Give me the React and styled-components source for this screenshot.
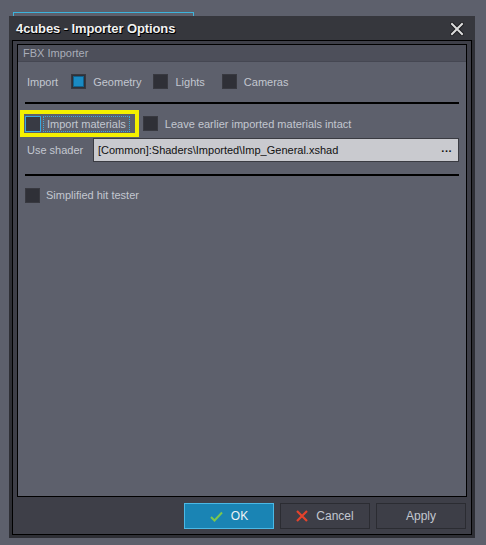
import React from 'react';
import styled, { createGlobalStyle, css } from 'styled-components';

const GlobalStyle = createGlobalStyle`
  html, body {
    margin: 0;
    padding: 0;
    background: #5d606c;
  }
  body {
    font-family: 'Liberation Sans', Arial, sans-serif;
    font-size: 11px;
    color: #c3c7d0;
  }
`;

const Page = styled.div`
  width: 486px;
  height: 545px;
  padding-top: 12px;
  box-sizing: border-box;
  overflow: hidden;
`;

const BackTab = styled.div`
  margin-left: 13px;
  width: 181px;
  height: 4px;
  box-sizing: border-box;
  border: 1px solid #3cb4dc;
  border-bottom: none;
`;

const Dialog = styled.div`
  margin-left: 9px;
  width: 466px;
  height: 522px;
  background: #2e2f35;
  display: flex;
  flex-direction: column;
`;

const TitleBar = styled.div`
  height: 24px;
  background: #36373d;
  display: flex;
  align-items: center;
  justify-content: space-between;
  padding: 0 10px 0 7px;
`;

const Title = styled.span`
  font-family: 'Liberation Sans', Arial, sans-serif;
  font-weight: 700;
  font-size: 13px;
  color: #f2f2f2;
  text-shadow: 1px 1px 0 #000, 0 1px 0 #000;
  letter-spacing: -0.1px;
`;

const CloseButton = styled.button`
  width: 16px;
  height: 16px;
  padding: 0;
  border: none;
  background: transparent;
  display: flex;
  align-items: center;
  justify-content: center;
  margin-top: 2px;
`;

const Client = styled.div`
  flex: 1;
  margin: 0 3px 3px 3px;
  border: 1px solid #000;
  background: #3e3f48;
  padding: 3px 4px 0 4px;
  display: flex;
  flex-direction: column;
`;

const Group = styled.div`
  flex: 1;
  border: 1px solid #000;
  background: #5d606c;
  display: flex;
  flex-direction: column;
`;

const GroupHeader = styled.div`
  height: 16px;
  background: #4d4f5a;
  border-bottom: 1px solid #454752;
  padding-left: 5px;
  display: flex;
  align-items: center;
  color: #a9adb8;
  font-size: 11px;
`;

const GroupBody = styled.div`
  padding: 12px 7px 0 7px;
  display: flex;
  flex-direction: column;
`;

const Row = styled.div`
  display: flex;
  align-items: center;
  height: ${({ $h }) => $h || 15}px;
  margin-top: ${({ $mt }) => $mt || 0}px;
`;

const Separator = styled.div`
  height: 2px;
  background: #000;
  margin-top: ${({ $mt }) => $mt}px;
`;

const Label = styled.span`
  padding-left: 2px;
  width: ${({ $w }) => ($w ? `${$w}px` : 'auto')};
  flex-shrink: 0;
  color: #c3c7d0;
  white-space: nowrap;
`;

const CheckItem = styled.label`
  display: flex;
  align-items: center;
  gap: ${({ $gap }) => $gap || 7}px;
  margin-left: ${({ $ml }) => $ml || 0}px;
  white-space: nowrap;
  color: #c3c7d0;
`;

const Box = styled.span`
  width: 15px;
  height: 15px;
  box-sizing: border-box;
  flex-shrink: 0;
  background: #2f3037;
  border: 1px solid #383940;
  display: flex;
  align-items: center;
  justify-content: center;

  ${({ $focused }) =>
    $focused &&
    css`
      width: 16px;
      height: 16px;
      background: #383a44;
      border-color: #3aa9df;
    `}
`;

const Tick = styled.span`
  width: 11px;
  height: 11px;
  box-sizing: border-box;
  background: #1a8ac2;
  border: 1px solid #13608a;
`;

const Highlight = styled.div`
  margin-left: -5px;
  height: 27px;
  box-sizing: border-box;
  border: 4px solid #f5f000;
  padding: 0 5px 0 1px;
  display: flex;
  align-items: center;
`;

const FocusText = styled.span`
  margin-left: 2px;
  padding: 1px 3px;
  border: 1px dotted #3aa9df;
  color: #c3c7d0;
`;

const PathField = styled.div`
  flex: 1;
  height: 24px;
  box-sizing: border-box;
  background: #c9cacf;
  border: 1px solid #3a3b42;
  display: flex;
  align-items: center;
  justify-content: space-between;
  padding: 0 6px 0 4px;
  color: #111;
  font-size: 11px;
`;

const Dots = styled.span`
  font-weight: 700;
  letter-spacing: 0.5px;
  margin-top: -4px;
`;

const ButtonRow = styled.div`
  height: 37px;
  display: flex;
  justify-content: flex-end;
  align-items: flex-start;
  gap: 6px;
  padding: 6px 1px 0 0;
  box-sizing: border-box;
`;

const DialogButton = styled.button`
  width: 90px;
  height: 26px;
  box-sizing: border-box;
  border: 1px solid #2b2c32;
  background: #3d3e47;
  color: #c3c7d0;
  font-family: 'Liberation Sans', Arial, sans-serif;
  font-size: 12px;
  display: flex;
  align-items: center;
  justify-content: center;
  gap: 8px;
  padding: 0;

  ${({ $primary }) =>
    $primary &&
    css`
      background: #1a84b4;
      border-color: #4bb9e6;
      color: #eef3f6;
    `}
`;

function CloseIcon() {
  return (
    <svg width="14" height="14" viewBox="0 0 14 14">
      <path d="M2 2 L12 12 M12 2 L2 12" stroke="#1c1c20" strokeWidth="4" strokeLinecap="square" />
      <path d="M2 2 L12 12 M12 2 L2 12" stroke="#dcdcdc" strokeWidth="2" strokeLinecap="square" />
    </svg>
  );
}

function CheckIcon() {
  return (
    <svg width="13" height="11" viewBox="0 0 13 11">
      <path d="M1 6 L4.5 9.5 L12 1.5" stroke="#7cc84e" strokeWidth="2" fill="none" />
    </svg>
  );
}

function CrossIcon() {
  return (
    <svg width="12" height="12" viewBox="0 0 12 12">
      <path d="M1 1 L11 11 M11 1 L1 11" stroke="#e4432c" strokeWidth="2.2" />
    </svg>
  );
}

function Checkbox({ checked, focused }) {
  return <Box $focused={focused}>{checked && <Tick />}</Box>;
}

export default function App() {
  return (
    <Page>
      <GlobalStyle />
      <BackTab />
      <Dialog>
        <TitleBar>
          <Title>4cubes - Importer Options</Title>
          <CloseButton>
            <CloseIcon />
          </CloseButton>
        </TitleBar>
        <Client>
          <Group>
            <GroupHeader>FBX Importer</GroupHeader>
            <GroupBody>
              <Row>
                <Label>Import</Label>
                <CheckItem $ml={13}>
                  <Checkbox checked />
                  Geometry
                </CheckItem>
                <CheckItem $ml={12}>
                  <Checkbox />
                  Lights
                </CheckItem>
                <CheckItem $ml={17}>
                  <Checkbox />
                  Cameras
                </CheckItem>
              </Row>
              <Separator $mt={13} />
              <Row $h={27} $mt={6}>
                <Highlight>
                  <Checkbox focused />
                  <FocusText>Import materials</FocusText>
                </Highlight>
                <CheckItem $ml={4}>
                  <Checkbox />
                  Leave earlier imported materials intact
                </CheckItem>
              </Row>
              <Row $h={24} $mt={1}>
                <Label $w={66}>Use shader</Label>
                <PathField>
                  <span>[Common]:Shaders\Imported\Imp_General.xshad</span>
                  <Dots>...</Dots>
                </PathField>
              </Row>
              <Separator $mt={12} />
              <Row $h={16} $mt={11}>
                <CheckItem $gap={6}>
                  <Checkbox />
                  Simplified hit tester
                </CheckItem>
              </Row>
            </GroupBody>
          </Group>
          <ButtonRow>
            <DialogButton $primary>
              <CheckIcon />
              OK
            </DialogButton>
            <DialogButton>
              <CrossIcon />
              Cancel
            </DialogButton>
            <DialogButton>Apply</DialogButton>
          </ButtonRow>
        </Client>
      </Dialog>
    </Page>
  );
}
